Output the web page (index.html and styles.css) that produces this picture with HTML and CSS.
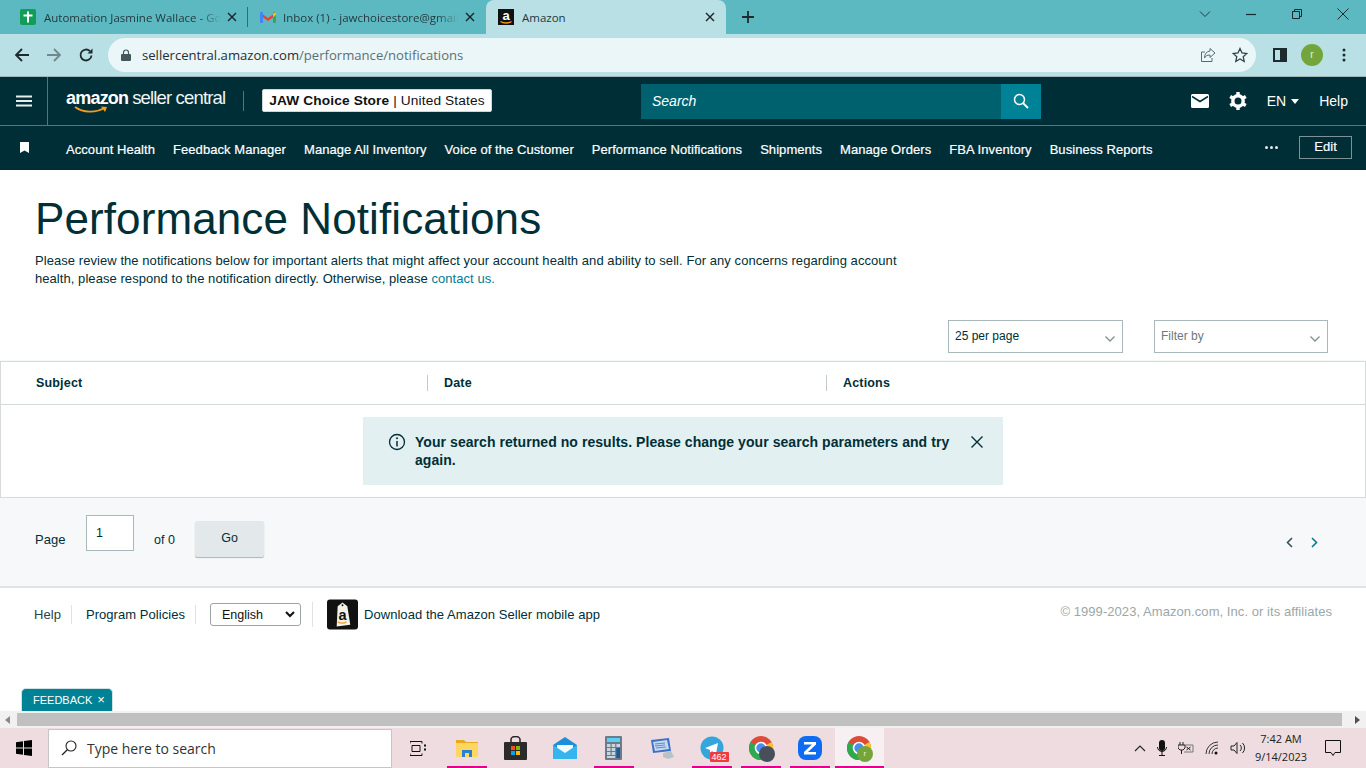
FILE: index.html
```html
<!DOCTYPE html>
<html lang="en">
<head>
<meta charset="utf-8">
<title>Amazon</title>
<link rel="stylesheet" href="styles.css">
</head>
<body>
<div class="tabstrip">
  <div class="tab">
    <svg class="fav" viewBox="0 0 16 16" width="16" height="16"><rect width="16" height="16" rx="2" fill="#0f9d58"/><path d="M8 2.500v11M3.500 6.500h9" stroke="#fff" stroke-width="2"/></svg>
    <span class="tab-title">Automation Jasmine Wallace - Google Sheets</span>
    <svg class="tab-x" viewBox="0 0 10 10" width="10" height="10"><path d="M1 1l8 8M9 1l-8 8" stroke="#202124" stroke-width="1.400"/></svg>
  </div>
  <div class="tab-sep"></div>
  <div class="tab tab-two">
    <svg class="fav" viewBox="0 0 16 12" width="16" height="12"><path d="M1 2l7 5 7-5v3l-7 5-7-5z" fill="#ea4335"/><path d="M0 2a1.500 1.500 0 0 1 3 .5V12H1a1 1 0 0 1-1-1z" fill="#4285f4"/><path d="M16 2a1.500 1.500 0 0 0-3 .5V12h2a1 1 0 0 0 1-1z" fill="#34a853"/><path d="M13 2.500L16 1v3l-3 2.200z" fill="#fbbc04"/></svg>
    <span class="tab-title">Inbox (1) - jawchoicestore@gmail.com - Gmail</span>
    <svg class="tab-x" viewBox="0 0 10 10" width="10" height="10"><path d="M1 1l8 8M9 1l-8 8" stroke="#202124" stroke-width="1.400"/></svg>
  </div>
  <div class="tab tab-active">
    <svg class="fav-amz" viewBox="0 0 16 16" width="16" height="16"><rect width="16" height="16" fill="#111"/><text x="8" y="11" text-anchor="middle" class="fav-a">a</text><path d="M2.500 12.500c3 2 8 2 11 0" fill="none" stroke="#f39a21" stroke-width="1.300"/></svg>
    <span class="tab-title">Amazon</span>
    <svg class="tab-x" viewBox="0 0 10 10" width="10" height="10"><path d="M1 1l8 8M9 1l-8 8" stroke="#202124" stroke-width="1.400"/></svg>
  </div>
  <svg class="tab-plus" viewBox="0 0 12 12" width="12" height="12"><path d="M6 0v12M0 6h12" stroke="#1f2a2c" stroke-width="1.800"/></svg>
  <div class="win-controls">
    <svg viewBox="0 0 12 12" width="12" height="12"><path d="M1 3.500l5 5 5-5" fill="none" stroke="#263a3e"/></svg>
    <svg viewBox="0 0 12 12" width="12" height="12"><path d="M1 6.500h10" stroke="#1b2a2d" stroke-width="1.200"/></svg>
    <svg viewBox="0 0 12 12" width="12" height="12"><path d="M1.500 3.500h7v7h-7zM3.500 3.500v-2h7v7h-2" fill="none" stroke="#1b2a2d"/></svg>
    <svg viewBox="0 0 12 12" width="12" height="12"><path d="M.5.500l11 11M11.500.500l-11 11" stroke="#1b2a2d"/></svg>
  </div>
</div>

<div class="toolbar">
  <svg class="tb-icon" viewBox="0 0 16 16" width="16" height="16"><path d="M15 8H2M8 2L2 8l6 6" fill="none" stroke="#1f2a2c" stroke-width="1.800"/></svg>
  <svg class="tb-icon" viewBox="0 0 16 16" width="16" height="16"><path d="M1 8h13M8 2l6 6-6 6" fill="none" stroke="#73888c" stroke-width="1.800"/></svg>
  <svg class="tb-icon" viewBox="0 0 16 16" width="16" height="16"><path d="M13.500 8.500a5.500 5.500 0 1 1-1.600-4.400" fill="none" stroke="#1f2a2c" stroke-width="1.800"/><path d="M14.500 1.500v5h-5z" fill="#1f2a2c"/></svg>
  <div class="urlbar">
    <svg viewBox="0 0 10 12" width="10" height="12"><path d="M2.500 5V3.500a2.500 2.500 0 0 1 5 0V5" fill="none" stroke="#44575b" stroke-width="1.200"/><rect y="5" width="10" height="7" rx="1" fill="#44575b"/></svg>
    <span class="url"><span class="url-host">sellercentral.amazon.com</span>/performance/notifications</span>
    <svg class="url-share" viewBox="0 0 16 16" width="16" height="16"><path d="M10 1.500l5 4.500-5 4.500V8C7 8 5.500 9 4.500 11c0-4 2-6.500 5.500-7z" fill="none" stroke="#5a6b6f"/><path d="M12 11v3.500H1.500V5H5" fill="none" stroke="#5a6b6f"/></svg>
    <svg viewBox="0 0 16 16" width="16" height="16"><path d="M8 1.500l2 4.500 4.800.5-3.600 3.200 1 4.800L8 12l-4.200 2.500 1-4.800L1.200 6.500 6 6z" fill="none" stroke="#33464a" stroke-width="1.300"/></svg>
  </div>
  <svg class="side-icon" viewBox="0 0 14 14" width="14" height="14"><path d="M1 1h12v12H1z" fill="none" stroke="#1f2a2c" stroke-width="2"/><rect x="7" y="1" width="6" height="12" fill="#1f2a2c"/></svg>
  <span class="avatar">r</span>
  <svg class="kebab" viewBox="0 0 4 14" width="4" height="14"><circle cx="2" cy="2" r="1.500" fill="#1f2a2c"/><circle cx="2" cy="7" r="1.500" fill="#1f2a2c"/><circle cx="2" cy="12" r="1.500" fill="#1f2a2c"/></svg>
</div>

<header class="topbar">
  <div class="burger-cell">
    <svg viewBox="0 0 16 12" width="16" height="12"><path d="M0 1.500h16M0 6h16M0 10.500h16" stroke="#e8eeee" stroke-width="2"/></svg>
  </div>
  <div class="logo">
    <span class="logo-amazon">amazon</span><span class="logo-sc">seller central</span>
    <svg class="logo-smile" viewBox="0 0 34 8" width="34" height="8"><path d="M1 1c8 6 21 6 29 1" fill="none" stroke="#f39a21" stroke-width="1.800"/><path d="M27 .5l6 .5-2 5z" fill="#f39a21"/></svg>
  </div>
  <div class="logo-sep"></div>
  <div class="store"><b>JAW Choice Store</b> | United States</div>
  <div class="search">
    <span class="search-text">Search</span>
    <span class="search-btn"><svg viewBox="0 0 16 16" width="16" height="16"><circle cx="6.500" cy="6.500" r="5" fill="none" stroke="#fff" stroke-width="1.500"/><path d="M10 10l5 5" stroke="#fff" stroke-width="1.800"/></svg></span>
  </div>
  <div class="top-right">
    <svg viewBox="0 0 18 14" width="18" height="14"><rect width="18" height="14" rx="1.500" fill="#fff"/><path d="M1 2.500l8 5 8-5" fill="none" stroke="#002e36" stroke-width="1.500"/></svg>
    <svg viewBox="0 0 18 18" width="18" height="18"><circle cx="9" cy="9" r="5.200" fill="none" stroke="#fff" stroke-width="3.400"/><path d="M9 0v3.500M9 14.500V18M1.200 4.500l3 1.700M13.800 11.800l3 1.700M16.800 4.500l-3 1.700M4.200 11.800l-3 1.700" stroke="#fff" stroke-width="3.400"/></svg>
    <span class="lang">EN<i class="caret"></i></span>
    <span class="help">Help</span>
  </div>
</header>

<nav class="navbar">
  <svg class="bookmark" viewBox="0 0 9 11" width="9" height="11"><path d="M0 0h9v11L4.500 8.500 0 11z" fill="#fff"/></svg>
  <a>Account Health</a><a>Feedback Manager</a><a>Manage All Inventory</a><a>Voice of the Customer</a><a>Performance Notifications</a><a>Shipments</a><a>Manage Orders</a><a>FBA Inventory</a><a>Business Reports</a>
  <span class="dots"><i></i><i></i><i></i></span>
  <span class="edit">Edit</span>
</nav>

<main class="page">
  <section class="intro">
    <h1>Performance Notifications</h1>
    <p>Please review the notifications below for important alerts that might affect your account health and ability to sell. For any concerns regarding account health, please respond to the notification directly. Otherwise, please <a>contact us.</a></p>
  </section>
  <div class="filters">
    <div class="dropdown"><span>25 per page</span><svg viewBox="0 0 10 6" width="10" height="6"><path d="M.5.500L5 5 9.500.500" fill="none" stroke="#7f9094" stroke-width="1.300"/></svg></div>
    <div class="dropdown dim"><span>Filter by</span><svg viewBox="0 0 10 6" width="10" height="6"><path d="M.5.500L5 5 9.500.500" fill="none" stroke="#7f9094" stroke-width="1.300"/></svg></div>
  </div>
  <section class="table">
    <div class="thead">
      <div class="th th-subject">Subject</div>
      <div class="th th-date">Date</div>
      <div class="th th-actions">Actions</div>
    </div>
    <div class="tbody">
      <div class="alert">
        <svg class="alert-i" viewBox="0 0 18 18" width="18" height="18"><circle cx="9" cy="9" r="7.500" fill="none" stroke="#002f36" stroke-width="1.300"/><path d="M9 8v5.500" stroke="#002f36" stroke-width="1.500"/><circle cx="9" cy="5.300" r="1" fill="#002f36"/></svg>
        <span class="alert-text">Your search returned no results. Please change your search parameters and try again.</span>
        <svg class="alert-x" viewBox="0 0 12 12" width="12" height="12"><path d="M.5.500l11 11M11.500.500l-11 11" stroke="#002f36" stroke-width="1.400"/></svg>
      </div>
    </div>
  </section>
  <section class="pager">
    <span class="pg-label">Page</span>
    <span class="pg-input">1</span>
    <span class="pg-of">of 0</span>
    <span class="pg-go">Go</span>
    <span class="pg-arrows">
      <svg viewBox="0 0 7 11" width="7" height="11"><path d="M6 1L1.500 5.500 6 10" fill="none" stroke="#33525a" stroke-width="1.600"/></svg>
      <svg viewBox="0 0 7 11" width="7" height="11"><path d="M1 1l4.500 4.500L1 10" fill="none" stroke="#007d91" stroke-width="1.600"/></svg>
    </span>
  </section>
  <footer class="footer">
    <span class="ft-link ft-help">Help</span>
    <span class="ft-link ft-policy">Program Policies</span>
    <span class="ft-select">English<svg viewBox="0 0 10 7" width="10" height="7"><path d="M1 1l4 4 4-4" fill="none" stroke="#111" stroke-width="2"/></svg></span>
    <span class="ft-app">
      <svg viewBox="0 0 32 31" width="31" height="31"><rect width="32" height="31" rx="3" fill="#111"/><path d="M11 7l5-4 5 4 3 19-14 2z" fill="#f4f1e8"/><circle cx="16" cy="6" r="1" fill="#111"/><path d="M11 23c3 2 7 2 9 0" fill="none" stroke="#f39a21" stroke-width="1.300"/><text x="16" y="21" text-anchor="middle" class="app-a">a</text></svg>
      <span>Download the Amazon Seller mobile app</span>
    </span>
    <span class="copyright">© 1999-2023, Amazon.com, Inc. or its affiliates</span>
  </footer>
  <div class="feedback">FEEDBACK <span class="fb-x">×</span></div>
</main>

<div class="hscroll">
  <svg viewBox="0 0 5 8" width="5" height="8"><path d="M5 0v8L0 4z" fill="#8a8a8a"/></svg>
  <div class="thumb"></div>
  <svg viewBox="0 0 5 8" width="5" height="8"><path d="M0 0v8l5-4z" fill="#505050"/></svg>
</div>

<div class="taskbar">
  <svg class="start" viewBox="0 0 16 16" width="16" height="16"><path d="M0 2.300l7-1v6.300H0zM8 1.100L16 0v7.600H8zM0 8.500h7v6.300l-7-1zM8 8.500h8V16l-8-1.100z" fill="#000"/></svg>
  <div class="tb-search">
    <svg viewBox="0 0 16 16" width="16" height="16"><circle cx="10" cy="6" r="5" fill="none" stroke="#222" stroke-width="1.100"/><path d="M6.300 9.700L1 15" stroke="#222" stroke-width="1.300"/></svg>
    <span>Type here to search</span>
  </div>
  <div class="task-item">
    <svg viewBox="0 0 16 15" width="16" height="15"><path d="M0 .500h12M2 4.500h8v6H2zM0 14.500h12M0 .500v2M12 .500v2M0 12.500v2M12 12.500v2" fill="none" stroke="#111"/><path d="M14 3.500h2v2h-2zM14 7.500h2v2h-2z" fill="#111"/></svg>
  </div>
  <div class="task-item on">
    <svg viewBox="0 0 22 18" width="22" height="18"><path d="M0 1h8l2 2h12v3H0z" fill="#e8a820"/><rect y="4" width="22" height="14" rx="1" fill="#ffd75e"/><rect x="6" y="11" width="10" height="7" fill="#2b7fd0"/><rect x="9" y="14" width="4" height="4" fill="#ffd75e"/></svg>
  </div>
  <div class="task-item">
    <svg viewBox="0 0 23 24" width="23" height="24"><path d="M7 7V3.500a4.500 3 0 0 1 9 0V7" fill="none" stroke="#222" stroke-width="1.500"/><rect y="6" width="23" height="18" rx="1" fill="#2b2b2b"/><rect x="7" y="10" width="4" height="4" fill="#f25022"/><rect x="12" y="10" width="4" height="4" fill="#7fba00"/><rect x="7" y="15" width="4" height="4" fill="#00a4ef"/><rect x="12" y="15" width="4" height="4" fill="#ffb900"/></svg>
  </div>
  <div class="task-item">
    <svg viewBox="0 0 24 22" width="24" height="22"><path d="M0 8L12 0l12 8v14H0z" fill="#1c8fd8"/><path d="M4 8h16v6l-8 4-8-4z" fill="#f4fbff"/><path d="M0 8l12 8 12-8v14H0z" fill="#35b4ee"/></svg>
  </div>
  <div class="task-item on">
    <svg viewBox="0 0 17 24" width="17" height="24"><rect width="17" height="24" rx="1" fill="#6c7a89"/><rect x="2" y="2" width="13" height="4" fill="#5cd0f2"/><path d="M2 8h3.500v3H2zM6.700 8h3.500v3H6.700zM11.400 8H15v3h-3.600zM2 12h3.500v3H2zM6.700 12h3.500v3H6.700zM2 16h3.500v3H2zM6.700 16h3.500v3H6.700zM2 20h8.200v2H2z" fill="#c9d6de"/><rect x="11.400" y="12" width="3.600" height="10" fill="#1a5c96"/></svg>
  </div>
  <div class="task-item">
    <svg viewBox="0 0 24 24" width="24" height="24"><path d="M0 4l18-2 2 13-18 2z" fill="#3f72c5"/><path d="M2 6l14-2 2 9-14 2z" fill="#c7d9f2"/><path d="M4 8l10-1M4 10l10-1M5 12l10-1" stroke="#5b8ad0"/><path d="M12 17l8-2 3 6-6 2-5-2z" fill="#b9c2c6"/></svg>
  </div>
  <div class="task-item on">
    <svg viewBox="0 0 24 24" width="24" height="24"><circle cx="12" cy="12" r="11.500" fill="#35a6dc"/><path d="M5 12l13-5-2 11-4-3-2 2v-3z" fill="#fff"/></svg>
    <span class="badge">462</span>
  </div>
  <div class="task-item on">
    <svg viewBox="0 0 24 24" width="24" height="24"><circle cx="12" cy="12" r="12" fill="#dd4b39"/><path d="M12 12L1.600 6A12 12 0 0 0 12 24z" fill="#2da94f"/><path d="M12 12v12A12 12 0 0 0 22.400 6z" fill="#fbc02d"/><circle cx="12" cy="12" r="5.500" fill="#4a8df0" stroke="#fff" stroke-width="1.600"/></svg>
    <span class="photo"></span>
  </div>
  <div class="task-item on">
    <svg viewBox="0 0 24 24" width="24" height="24"><rect width="24" height="24" rx="8" fill="#0f6cf2"/><path d="M6 6h12v2.500L10 16h8v2.500H6V16l8-7.500H6z" fill="#fff"/></svg>
  </div>
  <div class="task-item on active">
    <svg viewBox="0 0 24 24" width="24" height="24"><circle cx="12" cy="12" r="12" fill="#dd4b39"/><path d="M12 12L1.600 6A12 12 0 0 0 12 24z" fill="#2da94f"/><path d="M12 12v12A12 12 0 0 0 22.400 6z" fill="#fbc02d"/><circle cx="12" cy="12" r="5.500" fill="#4a8df0" stroke="#fff" stroke-width="1.600"/></svg>
    <span class="mini-avatar">r</span>
  </div>
  <div class="tray">
    <svg viewBox="0 0 12 7" width="12" height="7"><path d="M1 6l5-5 5 5" fill="none" stroke="#222" stroke-width="1.100"/></svg>
    <svg viewBox="0 0 10 16" width="10" height="16"><rect x="2" width="6" height="11" rx="3" fill="#111"/><path d="M.5 7a4.500 4.500 0 0 0 9 0M5 12v3M2 15.500h6" fill="none" stroke="#111"/></svg>
    <svg viewBox="0 0 16 12" width="16" height="12"><path d="M2 0v3M5 0v3M0 3h7v3L5 8H2L0 6zM3.500 8v4" fill="none" stroke="#222"/><path d="M7 3h8v7H6" fill="none" stroke="#777"/><path d="M8.500 5l4 3M12.500 5l-4 3" stroke="#111"/></svg>
    <svg viewBox="0 0 14 14" width="14" height="14"><path d="M1 13a12 12 0 0 1 12-12M4 13a9 9 0 0 1 9-9M7 13a6 6 0 0 1 6-6" fill="none" stroke="#333"/><circle cx="11" cy="12" r="1.500" fill="#111"/></svg>
    <svg viewBox="0 0 16 14" width="16" height="14"><path d="M1 5h3l3-3.500v11L4 9H1z" fill="none" stroke="#222"/><path d="M10 4a4 4 0 0 1 0 6M12.500 2a7 7 0 0 1 0 10" fill="none" stroke="#222"/></svg>
  </div>
  <div class="clock"><span>7:42 AM</span><span>9/14/2023</span></div>
  <svg class="notif" viewBox="0 0 16 16" width="16" height="16"><path d="M.5.500h15v12H10l-2 3-2-3H.5z" fill="none" stroke="#111"/></svg>
</div>
</body>
</html>
```

FILE: styles.css
```css
* { box-sizing: border-box; }
html, body { margin: 0; height: 100%; }
body {
  width: 1366px; height: 768px; overflow: hidden;
  display: flex; flex-direction: column;
  font-family: "Liberation Sans", Arial, sans-serif;
  color: #002f36; background: #fff;
}

/* browser chrome */
.tabstrip { height: 34px; flex: none; display: flex; align-items: stretch; background: #5cb9c2; font-family: "Open Sans", sans-serif; font-size: 11.500px; }
.tab { width: 247px; height: 34px; display: flex; align-items: center; padding-left: 20px; padding-right: 10px; color: #25393d; }
.tab-two { width: 238px; padding-left: 12px; padding-right: 11px; }
.tab-active { width: 240px; padding-left: 12px; padding-right: 11px; background: #b8e0e5; border-radius: 8px 8px 0 0; }
.tab-sep { width: 1px; height: 20px; margin-top: 7px; background: #2f6d75; }
.fav { flex: none; margin-right: 8px; }
.tab-two .fav { margin-right: 7px; }
.fav-amz { flex: none; margin-right: 8px; }
.fav-a { font: bold 13px "Liberation Sans", sans-serif; fill: #fff; }
.tab-title { flex: 1; min-width: 0; white-space: nowrap; overflow: hidden; -webkit-mask-image: linear-gradient(to left, transparent, #000 22px); mask-image: linear-gradient(to left, transparent, #000 22px); }
.tab-active .tab-title { -webkit-mask-image: none; mask-image: none; }
.tab-x { flex: none; margin-left: 6px; }
.tab-plus { margin: 11px 0 0 16px; }
.win-controls { margin-left: auto; padding: 8px 17px 0 0; display: flex; gap: 34px; }

.toolbar { height: 43px; flex: none; display: flex; align-items: center; background: #b8e0e5; padding-left: 14px; border-bottom: 1px solid #9fb7bb; }
.tb-icon { flex: none; margin-right: 16px; }
.urlbar { width: 1148px; height: 34px; margin-left: -2px; border-radius: 17px; background: #eaf6f8; display: flex; align-items: center; padding: 0 8px 0 13px; gap: 9px; font-family: "Open Sans", sans-serif; font-size: 13.100px; }
.url { flex: 1; color: #5c7074; white-space: nowrap; padding-left: 2px; }
.url-host { color: #1f2f33; }
.url-share { margin-right: 7px; }
.side-icon { margin-left: 17px; flex: none; }
.avatar { width: 22px; height: 22px; margin-left: 14px; border-radius: 50%; background: #74a53a; color: #e6f0d8; font: 10px/22px "Liberation Sans", sans-serif; text-align: center; flex: none; }
.kebab { margin-left: 19px; flex: none; }

/* seller central header */
.topbar { height: 49px; flex: none; display: flex; align-items: center; background: #002e36; color: #fff; border-bottom: 1px solid #5a7377; }
.burger-cell { width: 48px; height: 48px; padding: 0 0 0 16px; display: flex; align-items: center; border-right: 1px solid #5a7377; }
.logo { position: relative; margin-left: 18px; width: 177px; white-space: nowrap; height: 30px; line-height: 24px; }
.logo-amazon { font-weight: bold; font-size: 18px; letter-spacing: -.8px; }
.logo-sc { font-size: 18.500px; letter-spacing: -.85px; margin-left: 4px; color: #f1f5f5; }
.logo-smile { position: absolute; left: 8px; top: 20px; }
.logo-sep { width: 1px; height: 20px; margin-right: 18px; background: #5a7377; }
.store { width: 230px; height: 23px; margin-top: -1px; background: #fff; border: 1px solid #cfd6d7; border-radius: 2px; color: #111; font-size: 13.700px; line-height: 22px; text-align: center; white-space: nowrap; letter-spacing: .13px; }
.search { width: 400px; height: 35px; margin-left: 149px; background: #00616e; display: flex; align-items: center; justify-content: space-between; padding-left: 11px; }
.search-text { font-style: italic; font-size: 14px; }
.search-btn { width: 40px; height: 35px; background: #008296; display: flex; align-items: center; justify-content: center; }
.top-right { margin-left: auto; display: flex; align-items: center; padding-right: 18px; font-size: 14px; }
.top-right svg:nth-child(2) { margin-left: 20px; }
.lang { margin-left: 20px; display: flex; align-items: center; }
.caret { width: 0; height: 0; margin-left: 5px; border: 4.500px solid transparent; border-top: 5px solid #fff; border-bottom: 0; }
.help { margin-left: 20px; }

.navbar { height: 44px; flex: none; display: flex; align-items: center; background: #002e36; color: #fff; font-size: 13px; letter-spacing: .06px; padding: 2px 14px 0 20px; gap: 18px; }
.navbar a { white-space: nowrap; -webkit-text-stroke: .2px #fff; }
.bookmark { margin-right: 19px; margin-top: -3px; }
.dots { margin-left: auto; margin-right: 3px; display: flex; gap: 2px; margin-top: -3px; }
.dots i { width: 3px; height: 3px; background: #e6ecec; border-radius: 50%; }
.edit { width: 53px; height: 23px; margin-top: -4px; border: 1px solid #7d9296; font-size: 13px; line-height: 20px; text-align: center; -webkit-text-stroke: .2px #fff; }

/* content */
.page { flex: 1; min-height: 0; position: relative; display: flex; flex-direction: column; }
.intro { padding: 22px 0 0 35px; height: 150px; }
h1 { margin: 0; font-size: 44px; font-weight: 400; line-height: 54px; color: #002f36; letter-spacing: .1px; }
.intro p { margin: 6px 0 0; width: 870px; font-size: 13px; line-height: 18px; letter-spacing: .06px; color: #002f36; }
.intro p a { color: #007d91; }
.filters { height: 41px; display: flex; justify-content: flex-end; gap: 31px; padding-right: 38px; }
.dropdown { width: 175px; height: 33px; border: 1px solid #a9b9bb; display: flex; align-items: center; justify-content: space-between; padding: 0 7px 0 6px; font-size: 12px; }
.dropdown + .dropdown { width: 174px; }
.dropdown span { margin-top: -2px; }
.dropdown svg { margin-top: 4px; }
.dim { color: #6c7a7d; }
.table { border: 1px solid #d5dbdb; box-shadow: 0 0 2px #e3e8e8; }
.thead { height: 43px; display: grid; grid-template-columns: 426px 399px 1fr; align-items: center; border-bottom: 1px solid #d5dbdb; font-size: 12.500px; font-weight: bold; letter-spacing: .17px; }
.th { height: 16px; line-height: 16px; padding-left: 16px; border-left: 1px solid #c3cccc; }
.th-subject { border-left: 0; padding-left: 35px; }
.tbody { height: 92px; padding: 12px 0 0 362px; }
.alert { width: 640px; height: 68px; background: #e3f0f2; display: flex; align-items: flex-start; padding: 16px 20px 0 25px; font-size: 14px; line-height: 18px; font-weight: bold; letter-spacing: .06px; }
.alert-i { flex: none; margin: 0 9px 0 0; }
.alert-text { width: 540px; flex: none; }
.alert-x { flex: none; margin: 3px 0 0 auto; }
.pager { height: 90px; background: #f7f8fa; border-bottom: 2px solid #e0e4e5; display: flex; align-items: flex-start; padding-left: 35px; font-size: 13px; }
.pg-label { margin-top: 34px; width: 51px; }
.pg-input { width: 48px; height: 36px; margin-top: 17px; background: #fff; border: 1px solid #a9b9bb; padding: 9px 0 0 9px; font-size: 12.500px; line-height: 16px; }
.pg-of { margin: 35px 0 0 20px; width: 41px; font-size: 12.500px; }
.pg-go { width: 69px; height: 36px; margin-top: 23px; background: #e3e9ea; border-radius: 2px; box-shadow: 0 1px 1px #a9b4b6; text-align: center; line-height: 35px; font-size: 12.500px; }
.pg-arrows { margin: 39px 48px 0 auto; width: 32px; display: flex; justify-content: space-between; }
.footer { position: relative; display: flex; align-items: center; height: 53px; padding-left: 34px; font-size: 13px; }
.ft-link { height: 19px; line-height: 19px; }
.ft-help { padding-right: 10px; border-right: 1px solid #dfe3e3; color: #2a4147; letter-spacing: .05px; }
.ft-policy { padding: 0 10px 0 14px; border-right: 1px solid #dfe3e3; color: #002f36; white-space: nowrap; letter-spacing: .05px; }
.ft-select { width: 91px; height: 23px; margin-left: 14px; border: 1px solid #9aa5a6; border-radius: 3px; display: flex; align-items: center; justify-content: space-between; padding: 0 2px 0 11px; font-size: 12.500px; color: #111; }
.ft-select svg { margin-right: 3px; }
.ft-app { display: flex; align-items: center; gap: 6px; margin-left: 11px; padding-left: 14px; border-left: 1px solid #dfe3e3; height: 25px; white-space: nowrap; letter-spacing: .05px; }
.app-a { font: bold 15px "Liberation Sans", sans-serif; fill: #111; }
.copyright { margin-left: auto; margin-right: 34px; margin-top: -7px; color: #9ba7a9; font-size: 13px; letter-spacing: .06px; }
.feedback { position: absolute; left: 21px; bottom: 0; width: 92px; height: 23px; padding: 0 0 0 11px; line-height: 22px; background: #008296; color: #fff; border: 1px solid #cfe3e6; border-bottom: 0; border-radius: 5px 5px 0 0; font-size: 11px; white-space: nowrap; }
.fb-x { font-size: 13px; margin-left: 2px; }

.hscroll { height: 17px; flex: none; background: #f1f1f1; display: flex; align-items: center; padding: 0 0 0 5px; }
.thumb { width: 1325px; height: 13px; margin: 0 13px 0 7px; background: #c0c0c0; }

.taskbar { height: 40px; flex: none; display: flex; align-items: center; background: #eedce1; font-family: "Open Sans", sans-serif; font-size: 11px; color: #222; }
.start { margin-left: 16px; flex: none; }
.tb-search { width: 344px; height: 39px; margin: 0 1px 0 16px; background: #fff; border: 1px solid #c9c5c7; display: flex; align-items: center; gap: 10px; padding-left: 12px; font-size: 14px; color: #333; }
.task-item { width: 49.100px; height: 40px; display: flex; align-items: center; justify-content: center; position: relative; }
.on::after { content: ""; position: absolute; left: 4.500px; right: 4.500px; bottom: 0; height: 2px; background: #e3008c; }
.active { background: #f6f0f2; }
.active::after { left: 0; right: 0; }
.badge { position: absolute; left: 22px; bottom: 6px; padding: 0 2px; height: 10px; border-radius: 1px; background: #f23a3a; color: #fff; font: 9px/10px "Liberation Sans", sans-serif; }
.photo { position: absolute; left: 22px; top: 18px; width: 16px; height: 16px; border-radius: 50%; background: #47505a; }
.mini-avatar { position: absolute; left: 22px; top: 18px; width: 16px; height: 16px; border-radius: 50%; background: #74a53a; color: #e6f0d8; font: 8px/16px "Liberation Sans", sans-serif; text-align: center; }
.tray { margin-left: auto; display: flex; align-items: center; gap: 11px; }
.clock { width: 62px; margin-left: 4px; display: flex; flex-direction: column; align-items: center; line-height: 18px; }
.notif { margin: 0 25px 0 13px; flex: none; }
```
